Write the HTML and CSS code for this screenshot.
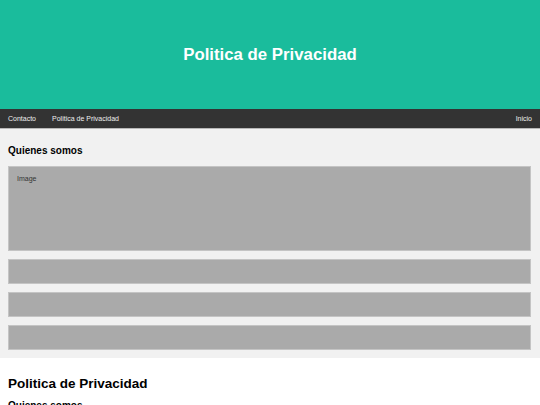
FILE: index.html
```html
<!DOCTYPE html>
<html lang="es">
<head>
<meta charset="utf-8">
<title>Politica de Privacidad</title>
<link rel="stylesheet" href="styles.css">
</head>
<body>
<header class="header">
  <h1 class="header-title">Politica de Privacidad</h1>
</header>
<nav class="topnav">
  <a class="nav-link" href="#">Contacto</a>
  <a class="nav-link" href="#">Politica de Privacidad</a>
  <a class="nav-link nav-right" href="#">Inicio</a>
</nav>
<section class="about">
  <h2 class="about-title">Quienes somos</h2>
  <div class="fakeimg fakeimg-big">Image</div>
  <div class="fakeimg"></div>
  <div class="fakeimg"></div>
  <div class="fakeimg"></div>
</section>
<main class="content">
  <h2 class="content-title">Politica de Privacidad</h2>
  <h3 class="content-sub">Quienes somos</h3>
</main>
</body>
</html>
```
FILE: styles.css
```css
* { box-sizing: border-box; }
html, body { margin: 0; padding: 0; }
body {
  font-family: "Liberation Sans", Arial, sans-serif;
  background: #fff;
  color: #000;
}
.header {
  background: #1abc9c;
  height: 109px;
  display: flex;
  align-items: center;
  justify-content: center;
}
.header-title {
  margin: 0;
  color: #fff;
  font-size: 16.8px;
  font-weight: bold;
}
.topnav {
  background: #333;
  height: 20px;
  display: flex;
  align-items: center;
  border-bottom: 1px solid #b8b8b8;
}
.nav-link {
  color: #eee;
  text-decoration: none;
  font-size: 7px;
  padding: 0 8px;
}
.nav-right { margin-left: auto; }
.about {
  background: #f1f1f1;
  padding: 8px 9px 8px 8px;
}
.about-title {
  margin: 8px 0 9px;
  font-size: 10px;
  font-weight: bold;
  line-height: 12px;
}
.fakeimg {
  background: #aaa;
  border: 1px solid #c4c4c4;
  height: 25px;
  margin-top: 8px;
  font-size: 7px;
  color: #333;
  padding: 8px;
}
.fakeimg-big {
  height: 85px;
  margin-top: 0;
}
.content {
  padding: 8px;
}
.content-title {
  margin: 10px 0 8px;
  font-size: 13.5px;
  line-height: 16px;
}
.content-sub {
  margin: 0;
  font-size: 10px;
}
```
